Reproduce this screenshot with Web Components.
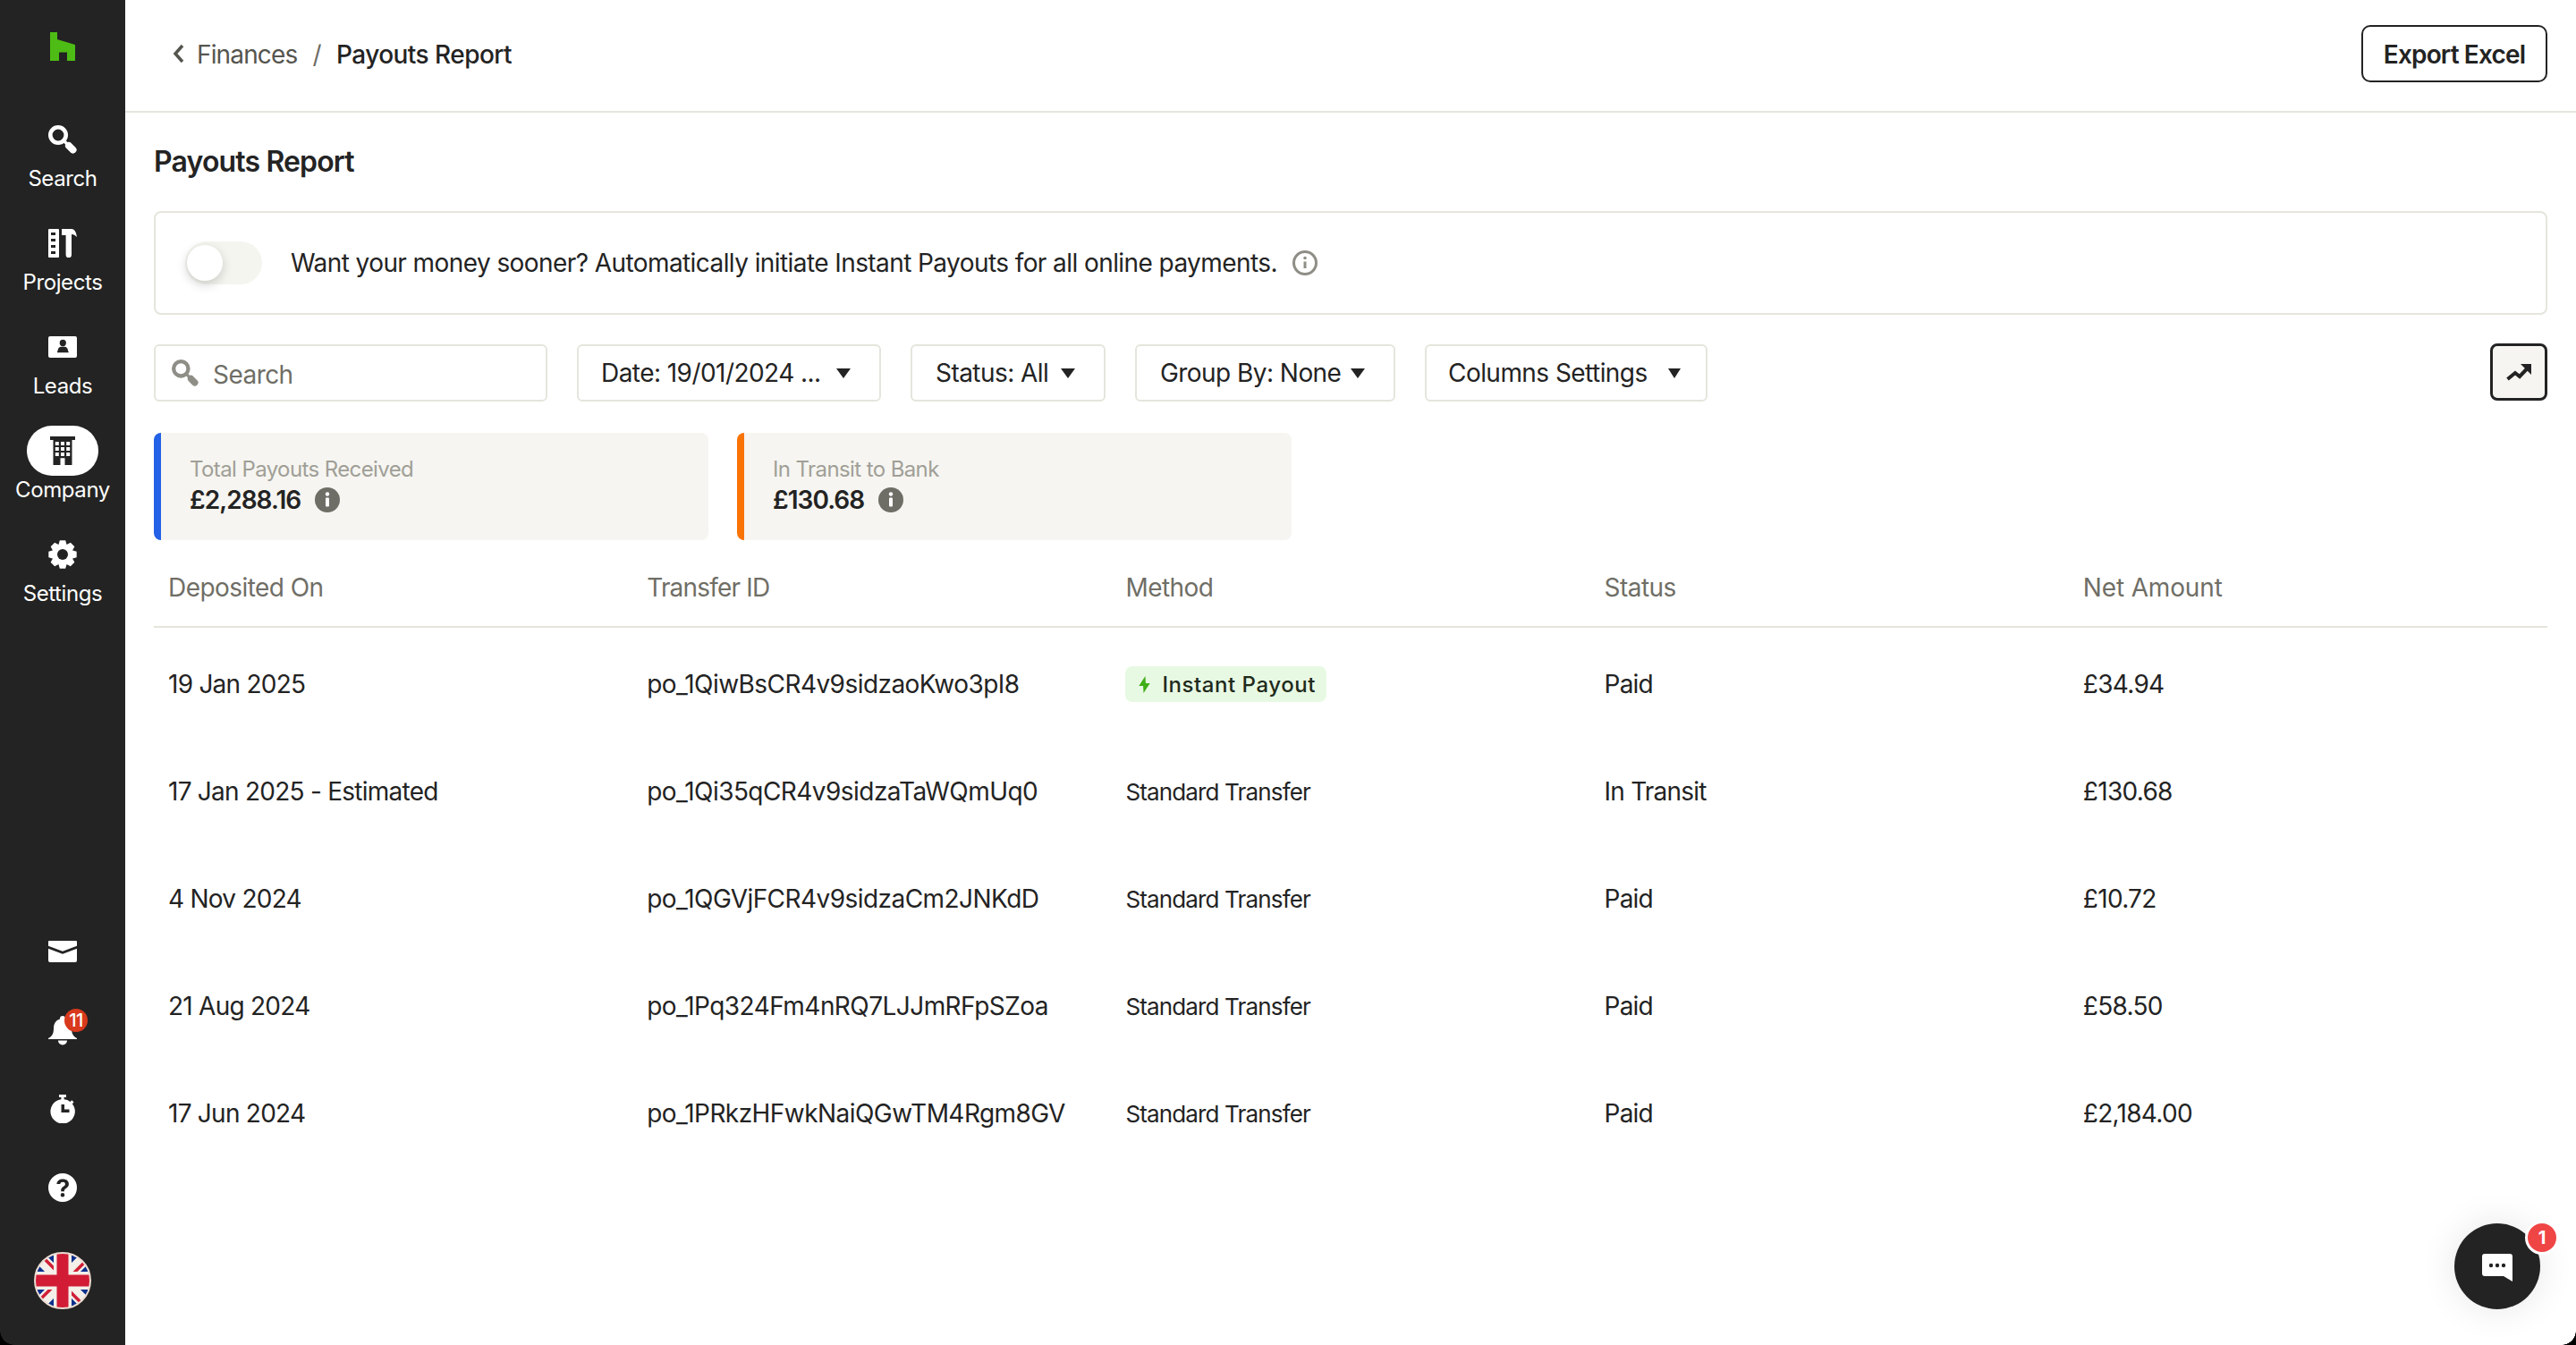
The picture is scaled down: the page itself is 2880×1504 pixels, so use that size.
<!DOCTYPE html>
<html lang="en">
<head>
<meta charset="utf-8">
<title>Payouts Report</title>
<style>
  html, body { margin: 0; height: 100%; background: #000; }
  body { font-family: "Inter", "Liberation Sans", sans-serif; color: #232323; }
</style>
</head>
<body>
<app-shell>
  <side-nav slot="nav"></side-nav>
  <top-bar></top-bar>
  <page-title>Payouts Report</page-title>
  <instant-banner>Want your money sooner? Automatically initiate Instant Payouts for all online payments.</instant-banner>
  <filter-bar></filter-bar>
  <stat-cards></stat-cards>
  <payout-table></payout-table>
  <chat-fab slot="overlay"></chat-fab>
</app-shell>

<script>
// eight tapered teeth round a 32x32 box
function gearPath() {
  let d = '';
  for (let i = 0; i < 8; i++) {
    const a = i * Math.PI / 4 - Math.PI / 2;
    const pts = [[11.5, -0.42], [16, -0.2], [16, 0.2], [11.5, 0.42]];
    pts.forEach(([r, o]) => {
      const x = (16 + r * Math.cos(a + o)).toFixed(2);
      const y = (16 + r * Math.sin(a + o)).toFixed(2);
      d += (d ? 'L' : 'M') + x + ' ' + y;
    });
  }
  return d + 'z';
}

const SEARCH = `<circle cx="11" cy="11" r="8.700" fill="none" stroke="currentColor" stroke-width="4.600"/>
  <path d="M17 17l4 4" fill="none" stroke="currentColor" stroke-width="3.500"/>
  <path d="M23 23l4.500 4.500" fill="none" stroke="currentColor" stroke-width="8" stroke-linecap="round"/>`;

const ICONS = {
  search: SEARCH,
  projects: '<path fill-rule="evenodd" d="M1 0h10a1 1 0 0 1 1 1v30a1 1 0 0 1-1 1H1a1 1 0 0 1-1-1V1a1 1 0 0 1 1-1zm2 4v3h5V4zm0 7v3h5v-3zm0 7v3h5v-3zm0 7v3h5v-3z"/><path d="M15 0h11c3 0 5 3 6 9-2-2-3.500-3-6-3v23a3.200 3.200 0 0 1-6.400 0V7H15z"/>',
  leads: '<path fill-rule="evenodd" d="M2 0h28a2 2 0 0 1 2 2v20a2 2 0 0 1-2 2H2a2 2 0 0 1-2-2V2a2 2 0 0 1 2-2zm14.300 3.800a3.600 3.600 0 1 0 0 7.200 3.600 3.600 0 0 0 0-7.200zM9.800 18.200h13l-1.500-4.800c-.5-1.300-2.500-2-5-2s-4.500.7-5 2z"/>',
  company: '<path fill-rule="evenodd" d="M0 0h28v4h-3.500v28h-8v-7.700h-5V32h-8V4H0zm5.800 6v4h4V6zm6.200 0v4h4V6zm6.200 0v4h4V6zM5.800 12v4h4v-4zm6.200 0v4h4v-4zm6.200 0v4h4v-4zM5.800 18v4h4v-4zm6.200 0v4h4v-4zm6.200 0v4h4v-4z"/>',
  settings: `<path d="${gearPath()}"/><circle cx="16" cy="16" r="6" fill="#232323"/>`,
  mail: '<path d="M1 0h30a1 1 0 0 1 1 1v4.700L16 11.700 0 5.700V1a1 1 0 0 1 1-1z"/><path d="M0 8.700l16 6 16-6V22a2 2 0 0 1-2 2H2a2 2 0 0 1-2-2z"/>',
  bell: '<path d="M16 0a3 3 0 0 1 3 3v.5c5 1.500 7 5.500 7 10.500 0 6 2 9 6 11v1H0v-1c4-2 6-5 6-11 0-5 2-9 7-10.500V3a3 3 0 0 1 3-3z"/><path d="M11 27.500h10a5 5 0 0 1-10 0z"/>',
  timer: '<path fill-rule="evenodd" d="M10 0h8v3h-2.400v2.200a13.500 13.500 0 0 1 6.900 2.700l1.800-1.700 2.200 2.200-1.700 1.800A13.700 13.700 0 1 1 12.400 5.200V3H10zm2.500 11v9h9v-3.500h-5.500V11z"/>',
  help: '<path fill-rule="evenodd" d="M16 0a16 16 0 1 1 0 32 16 16 0 0 1 0-32zm.3 6.500c-4 0-6.600 2-6.900 5.500h3.900c.2-1.500 1.300-2.300 2.900-2.300 1.600 0 2.700.9 2.700 2.200 0 1.100-.5 1.800-2 2.800-2 1.300-2.800 2.500-2.700 4.800v.8h3.700v-.6c0-1.300.5-2 2.100-3 1.900-1.200 2.900-2.700 2.900-4.800 0-3.300-2.600-5.400-6.600-5.400zM16 22a2.300 2.300 0 1 0 0 4.600 2.300 2.300 0 0 0 0-4.600z"/>'
};

function icon(name, w, h) {
  return `<svg width="${w}" height="${h}" viewBox="0 0 ${w} ${h}" fill="currentColor" aria-hidden="true">${ICONS[name]}</svg>`;
}

class AppShell extends HTMLElement {
  constructor() {
    super();
    this.attachShadow({ mode: 'open' }).innerHTML = `
      <style>
        :host { display: flex; height: 1504px; background: #fff; overflow: hidden; position: relative; }
        main { flex: 1; min-width: 0; display: flex; flex-direction: column; }
        .corner { position: absolute; bottom: 0; width: 16px; height: 16px; pointer-events: none; }
        .left { left: 0; background: radial-gradient(circle at 100% 0, transparent 15.5px, #000 16px); }
        .right { right: 0; background: radial-gradient(circle at 0 0, transparent 15.5px, #000 16px); }
      </style>
      <slot name="nav"></slot>
      <main><slot></slot></main>
      <slot name="overlay"></slot>
      <div class="corner left"></div>
      <div class="corner right"></div>
    `;
  }
}

class NavItem extends HTMLElement {
  constructor() {
    super();
    this.attachShadow({ mode: 'open' }).innerHTML = `
      <style>
        :host { display: flex; flex-direction: column; align-items: center; color: #fff; margin-bottom: 28px; }
        .ic { width: 80px; height: 56px; display: flex; align-items: center; justify-content: center; border-radius: 28px; }
        :host([active]) .ic { background: #fff; color: #232323; }
        .lb { font-size: 24px; line-height: 32px; white-space: nowrap; letter-spacing: -.4px; }
      </style>
      <div class="ic"><slot name="icon"></slot></div>
      <div class="lb"><slot></slot></div>
    `;
  }
}

class SideNav extends HTMLElement {
  constructor() {
    super();
    this.attachShadow({ mode: 'open' }).innerHTML = `
      <style>
        :host { display: flex; flex-direction: column; align-items: center; width: 140px; flex: none; height: 100%; background: #232323; color: #fff; }
        .logo { height: 128px; padding-top: 36px; box-sizing: border-box; }
        .tools { margin-top: auto; display: flex; flex-direction: column; align-items: center; padding-bottom: 40px; }
        .tool { position: relative; height: 88px; width: 80px; display: flex; align-items: center; justify-content: center; }
        .badge { position: absolute; left: 42px; top: 20px; width: 26px; height: 26px; border-radius: 50%; background: #d9391c; font-size: 20px; line-height: 26px; text-align: center; color: #fff; font-weight: 500; letter-spacing: -.5px; }
        .flag { margin-top: 28px; width: 64px; height: 64px; display: block; }
        svg { display: block; }
      </style>
      <div class="logo">
        <svg width="28" height="32" viewBox="0 0 28 32" fill="#4dbc15"><path d="M0 0h8v8l20 6v18h-9V22.500h-9V32H0z"/></svg>
      </div>
      <nav-item>${icon('search', 32, 32)}Search</nav-item>
      <nav-item>${icon('projects', 32, 32)}Projects</nav-item>
      <nav-item>${icon('leads', 32, 24)}Leads</nav-item>
      <nav-item active>${icon('company', 28, 32)}Company</nav-item>
      <nav-item>${icon('settings', 32, 32)}Settings</nav-item>
      <div class="tools">
        <div class="tool">${icon('mail', 32, 24)}</div>
        <div class="tool">${icon('bell', 32, 33)}<span class="badge">11</span></div>
        <div class="tool">${icon('timer', 28, 32)}</div>
        <div class="tool">${icon('help', 32, 32)}</div>
        <svg class="flag" viewBox="0 0 64 64">
          <defs><clipPath id="fc"><circle cx="32" cy="32" r="31"/></clipPath></defs>
          <g clip-path="url(#fc)">
            <rect width="64" height="64" fill="#0a2f8c"/>
            <path d="M0 0L64 64M64 0L0 64" stroke="#f4efe9" stroke-width="14"/>
            <path d="M4 0L34 30M64 4L34 34M60 64L30 34M0 60L30 30" stroke="#cf1f36" stroke-width="3.500"/>
            <path d="M32 0V64M0 32H64" stroke="#f4efe9" stroke-width="20"/>
            <path d="M32 0V64M0 32H64" stroke="#d21c36" stroke-width="13"/>
          </g>
          <circle cx="32" cy="32" r="31" fill="none" stroke="#ecdcd2" stroke-width="2"/>
        </svg>
      </div>
    `;
    // nav-item icons live in the named slot
    this.shadowRoot.querySelectorAll('nav-item > svg').forEach(s => s.setAttribute('slot', 'icon'));
  }
}

class TopBar extends HTMLElement {
  constructor() {
    super();
    this.attachShadow({ mode: 'open' }).innerHTML = `
      <style>
        :host { display: flex; align-items: center; height: 126px; box-sizing: border-box; border-bottom: 2px solid #e5e5dd; padding: 0 32px 4px 52px; font-size: 28px; letter-spacing: -.55px; }
        svg { margin-right: 14px; }
        span { padding-top: 1px; }
        .parent { color: #55554f; letter-spacing: -.85px; }
        .sep { color: #6f6e66; margin: 0 17px; }
        .cur { font-weight: 500; color: #232323; }
        button { margin-left: auto; width: 208px; height: 64px; border: 2.500px solid #232323; border-radius: 10px; background: #fff; color: #232323; font: 600 28px "Inter", "Liberation Sans", sans-serif; letter-spacing: -.85px; padding: 1px 0 0; }
      </style>
      <svg width="14" height="22" viewBox="0 0 14 22" fill="none" stroke="#55554f" stroke-width="3.500"><path d="M12 2L4 11l8 9"/></svg>
      <span class="parent">Finances</span><span class="sep">/</span><span class="cur">Payouts Report</span>
      <button type="button">Export Excel</button>
    `;
  }
}

class PageTitle extends HTMLElement {
  constructor() {
    super();
    this.attachShadow({ mode: 'open' }).innerHTML = `
      <style>
        :host { display: block; margin: 35px 32px 35px; font-size: 32px; line-height: 40px; font-weight: 600; letter-spacing: -.85px; }
      </style>
      <slot></slot>
    `;
  }
}

class InstantBanner extends HTMLElement {
  constructor() {
    super();
    this.attachShadow({ mode: 'open' }).innerHTML = `
      <style>
        :host { display: flex; align-items: center; margin: 0 32px; height: 116px; box-sizing: border-box; border: 2.500px solid #e5e5dd; border-radius: 8px; padding-left: 33px; font-size: 28px; letter-spacing: -.58px; }
        .track { position: relative; width: 86px; height: 48px; border-radius: 24px; background: #f5f5f0; flex: none; margin-right: 32px; }
        .knob { position: absolute; left: 2px; top: 4px; width: 40px; height: 40px; border-radius: 50%; background: #fff; box-shadow: 0 4px 12px rgba(0,0,0,.18); }
        svg { margin-left: 17px; margin-top: -1px; }
      </style>
      <div class="track"><div class="knob"></div></div>
      <span><slot></slot></span>
      <svg width="28" height="28" viewBox="0 0 28 28" fill="none" stroke="#8f8e86" stroke-width="3"><circle cx="14" cy="14" r="12.500"/><path d="M14 12.500v7.500" stroke-width="3"/><circle cx="14" cy="8.500" r="1.800" fill="#8f8e86" stroke="none"/></svg>
    `;
  }
}

class FilterButton extends HTMLElement {
  constructor() {
    super();
    this.attachShadow({ mode: 'open' }).innerHTML = `
      <style>
        :host { display: flex; align-items: center; justify-content: space-between; height: 64px; box-sizing: border-box; border: 2.500px solid #e5e5dd; border-radius: 6px; padding: 0 var(--pad-r, 32px) 0 var(--pad-l, 25px); font-size: 28px; letter-spacing: -.55px; white-space: nowrap; }
        i { width: 0; height: 0; border-left: var(--caret, 8px) solid transparent; border-right: var(--caret, 8px) solid transparent; border-top: 11px solid #232323; }
      </style>
      <slot></slot><i></i>
    `;
  }
}

class FilterBar extends HTMLElement {
  constructor() {
    super();
    this.attachShadow({ mode: 'open' }).innerHTML = `
      <style>
        :host { display: flex; align-items: center; gap: 33px; margin: 32px 32px 34px; height: 66px; }
        .search { display: flex; align-items: center; width: 440px; height: 64px; box-sizing: border-box; border: 2.500px solid #e5e5dd; border-radius: 6px; padding: 3px 0 0 18px; color: #6f6e66; font-size: 28px; letter-spacing: -.55px; flex: none; }
        .search svg { margin-right: 16px; color: #8f8e86; margin-top: -3px; }
        .chart { margin-left: auto; align-self: flex-start; width: 64px; height: 64px; box-sizing: border-box; border: 3px solid #232323; border-radius: 8px; background: #f6f5f1; display: flex; align-items: center; justify-content: center; }
      </style>
      <div class="search">
        <svg width="30" height="30" viewBox="0 0 32 32">${ICONS.search}</svg>Search
      </div>
      <filter-button style="width:340px">Date: 19/01/2024 ...</filter-button>
      <filter-button style="width:218px;--pad-l:26px">Status: All</filter-button>
      <filter-button style="width:291px;--pad-l:26px">Group By: None</filter-button>
      <filter-button style="width:316px;--pad-l:24px;--pad-r:28px;--caret:7px">Columns Settings</filter-button>
      <div class="chart">
        <svg width="28" height="19" viewBox="0 0 28 19"><path d="M1.500 17L10 10l5 4 9-9.500" fill="none" stroke="#232323" stroke-width="4"/><path d="M16 0h12v12z" fill="#232323"/></svg>
      </div>
    `;
  }
}

class StatCard extends HTMLElement {
  constructor() {
    super();
    this.attachShadow({ mode: 'open' }).innerHTML = `
      <style>
        :host { display: flex; flex-direction: column; justify-content: center; width: 620px; height: 120px; box-sizing: border-box; background: #f6f5f1; border-radius: 8px; border-left: 8px solid var(--accent); padding: 0 0 3px 32px; }
        .lb { font-size: 24px; line-height: 32px; color: #a09f97; letter-spacing: -.6px; }
        .val { display: flex; align-items: center; font-size: 28px; line-height: 36px; font-weight: 600; letter-spacing: -.95px; }
        svg { margin-left: 16px; }
      </style>
      <div class="lb"><slot name="label"></slot></div>
      <div class="val"><slot></slot>
        <svg width="28" height="28" viewBox="0 0 28 28"><circle cx="14" cy="14" r="14" fill="#6f6e66"/><rect x="12" y="11.500" width="4" height="10" rx="1" fill="#fff"/><circle cx="14" cy="7.500" r="2.200" fill="#fff"/></svg>
      </div>
    `;
  }
}

class StatCards extends HTMLElement {
  constructor() {
    super();
    this.attachShadow({ mode: 'open' }).innerHTML = `
      <style>
        :host { display: flex; gap: 32px; margin: 0 32px; }
      </style>
      <stat-card style="--accent:#2361e6"><span slot="label">Total Payouts Received</span>£2,288.16</stat-card>
      <stat-card style="--accent:#f97306"><span slot="label">In Transit to Bank</span>£130.68</stat-card>
    `;
  }
}

class InstantBadge extends HTMLElement {
  constructor() {
    super();
    this.attachShadow({ mode: 'open' }).innerHTML = `
      <style>
        :host { display: inline-flex; align-items: center; height: 40px; width: 225px; box-sizing: border-box; padding-left: 15px; background: #e8f9e3; border-radius: 8px; font-size: 24px; font-weight: 500; letter-spacing: .55px; color: #1f2a1c; white-space: nowrap; }
        svg { margin-right: 13px; flex: none; }
      </style>
      <svg width="13" height="19" viewBox="0 0 13 20" fill="#3fae17"><path d="M7.500 0L0 11.500h5L5.500 20 13 8.500H8z"/></svg><slot></slot>
    `;
  }
}

class PayoutTable extends HTMLElement {
  constructor() {
    super();
    const rows = [
      ['19 Jan 2025', 'po_1QiwBsCR4v9sidzaoKwo3pI8', null, 'Paid', '£34.94'],
      ['17 Jan 2025 - Estimated', 'po_1Qi35qCR4v9sidzaTaWQmUq0', 'Standard Transfer', 'In Transit', '£130.68'],
      ['4 Nov 2024', 'po_1QGVjFCR4v9sidzaCm2JNKdD', 'Standard Transfer', 'Paid', '£10.72'],
      ['21 Aug 2024', 'po_1Pq324Fm4nRQ7LJJmRFpSZoa', 'Standard Transfer', 'Paid', '£58.50'],
      ['17 Jun 2024', 'po_1PRkzHFwkNaiQGwTM4Rgm8GV', 'Standard Transfer', 'Paid', '£2,184.00']
    ];
    const heads = ['Deposited On', 'Transfer ID', 'Method', 'Status', 'Net Amount'];
    const body = rows.map(r => `<div class="row">
        <span class="date">${r[0]}</span><span>${r[1]}</span>
        <span class="method">${r[2] || '<instant-badge>Instant Payout</instant-badge>'}</span>
        <span class="st">${r[3]}</span><span class="amt">${r[4]}</span>
      </div>`).join('');
    this.attachShadow({ mode: 'open' }).innerHTML = `
      <style>
        :host { display: block; margin: 0 32px; font-size: 28px; letter-spacing: -.55px; }
        .head, .row { display: grid; grid-template-columns: repeat(5, 1fr); align-items: center; }
        .head { height: 98px; border-bottom: 2px solid #e5e5dd; box-sizing: border-box; color: #6f6e66; padding-top: 10px; }
        .head span:nth-child(2) { letter-spacing: -.8px; }
        .head span:nth-child(5) { letter-spacing: -.15px; }
        .row { height: 120px; box-sizing: border-box; padding-top: 6px; }
        span { padding-left: 16px; white-space: nowrap; }
        .date { letter-spacing: -.75px; }
        .st { letter-spacing: -.8px; }
        .amt { letter-spacing: -.7px; }
        .method { display: flex; align-items: center; font-size: 26px; letter-spacing: -.85px; }
      </style>
      <div class="head">${heads.map(h => `<span>${h}</span>`).join('')}</div>
      ${body}
    `;
  }
}

class ChatFab extends HTMLElement {
  constructor() {
    super();
    this.attachShadow({ mode: 'open' }).innerHTML = `
      <style>
        :host { position: absolute; left: 2744px; top: 1368px; width: 96px; height: 96px; border-radius: 50%; background: #232323; box-shadow: 0 0 40px rgba(0,0,0,.1); display: flex; align-items: center; justify-content: center; }
        .n { position: absolute; left: 79px; top: -3px; width: 32px; height: 32px; border-radius: 50%; background: #f04545; border: 3px solid #fff; color: #fff; font-size: 20px; font-weight: 700; line-height: 32px; text-align: center; }
        svg { margin-top: 2px; }
      </style>
      <svg width="34" height="31" viewBox="0 0 34 31"><path d="M3 0h28a3 3 0 0 1 3 3v28l-10-6H3a3 3 0 0 1-3-3V3a3 3 0 0 1 3-3z" fill="#fff"/><circle cx="10" cy="13" r="2.200" fill="#232323"/><circle cx="17" cy="13" r="2.200" fill="#232323"/><circle cx="24" cy="13" r="2.200" fill="#232323"/></svg>
      <span class="n">1</span>
    `;
  }
}

customElements.define('app-shell', AppShell);
customElements.define('nav-item', NavItem);
customElements.define('side-nav', SideNav);
customElements.define('top-bar', TopBar);
customElements.define('page-title', PageTitle);
customElements.define('instant-banner', InstantBanner);
customElements.define('filter-button', FilterButton);
customElements.define('filter-bar', FilterBar);
customElements.define('stat-card', StatCard);
customElements.define('stat-cards', StatCards);
customElements.define('instant-badge', InstantBadge);
customElements.define('payout-table', PayoutTable);
customElements.define('chat-fab', ChatFab);
</script>
</body>
</html>
